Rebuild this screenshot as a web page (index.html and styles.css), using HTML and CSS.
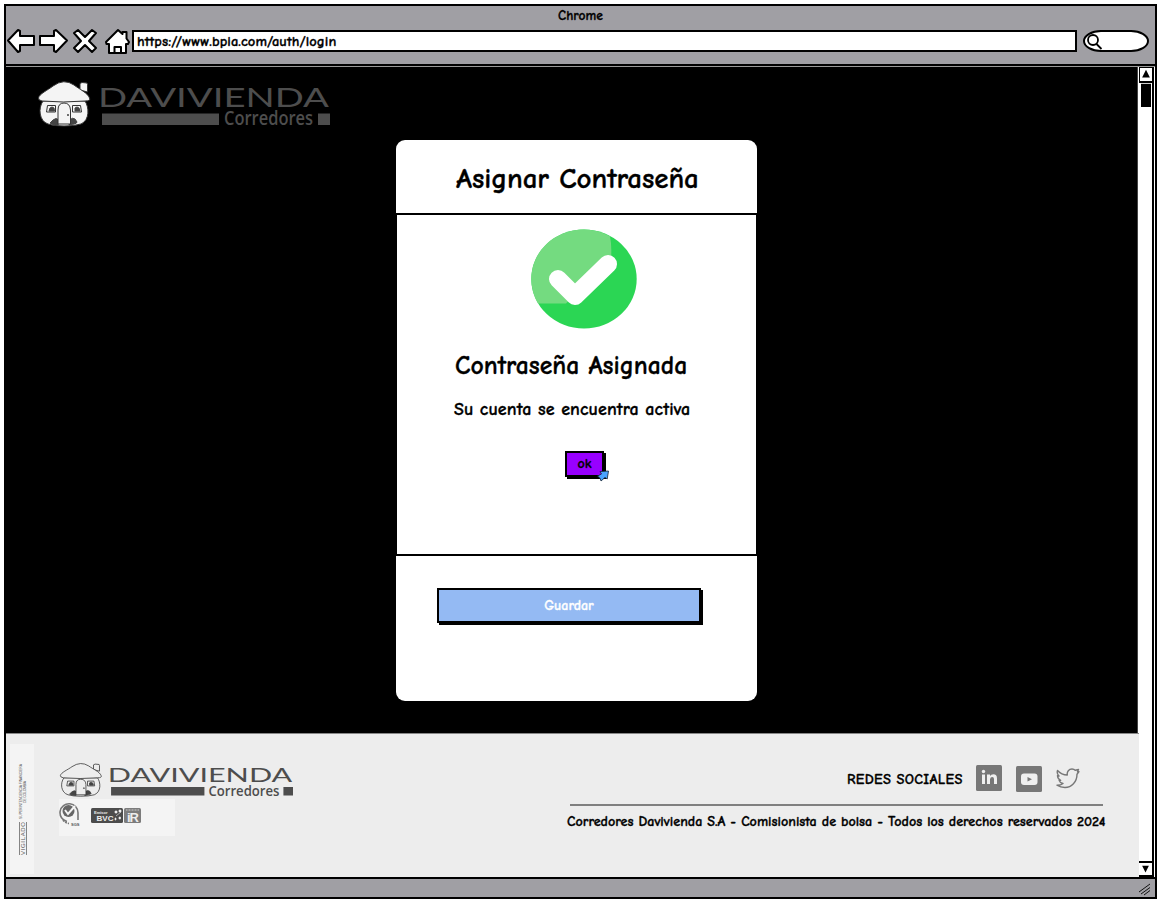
FILE: index.html
```
<!DOCTYPE html>
<html lang="es">
<head>
<meta charset="utf-8">
<title>Asignar Contraseña</title>
<link rel="stylesheet" href="styles.css">
</head>
<body>
<div class="window">
  <header class="chrome">
    <div class="chrome-title">Chrome</div>
    <div class="toolbar">
      <svg class="nav" width="126" height="28" viewBox="6 27 126 28">
        <path d="M8 40.500 18 30l2 1v5h14v9H20v6l-2 1zM40 36h14v-5l2-1 11 10.500L56 52l-2-1v-6H40z"/>
        <path d="m74 33 4-3 7 7 7-7 4 3-7 8 7 7-4 4-7-7-7 7-4-4 7-7z"/>
        <path d="m106 42 12-12 4.500 4V32h4v6.500l2.500 3.500-1 2h-2v9h-17v-9h-2.500z"/>
        <path d="M114.500 53v-6h6.500v6z"/>
      </svg>
      <div class="address">https://www.bpia.com/auth/login</div>
      <div class="search">
        <svg width="17" height="18" viewBox="0 0 17 18"><circle cx="7" cy="7" r="5"/><path d="m10.500 11 5 5"/></svg>
      </div>
    </div>
  </header>
  <div class="viewport">
    <div class="page">
      <main class="stage">
        <svg class="logo logo-top" viewBox="0 0 292 46" preserveAspectRatio="none">
          <g id="brand">
            <g class="house">
              <path d="M42 9V2.500l2-1 5 .5.500 1.500V11z"/>
              <path d="M5 20C0 27 1 40 10 43q6 2 16 2t17-2c9-4 8-17 4-23z"/>
              <path d="M.5 17C1 13 10 9 15 5Q26-3 36 4C41 8 50 12 51.500 17Q53 20 47 20Q25 22 4 20Q0 19 .5 17z"/>
              <path class="ink" d="M15 39q3-3 6 0l-1 5q-6 0-8-2zM37 38q-3-2-5 1l-1 5q8-1 8-3z"/>
              <path d="M9.500 24.500h8v6.500h-9zM34.500 24.500h8l1 6.500h-9z"/>
              <path class="ink" d="M11 30l1-3 2-1 2 1 .5 3zM37 30v-3l2-1 2 1 1 3z"/>
              <path d="M20 43V29q0-7 6-7t6.500 7v14z"/>
              <circle class="ink" cx="30" cy="34" r=".6"/>
            </g>
            <g class="brand-ink">
              <text class="wordmark" x="60" y="25.500" textLength="231" lengthAdjust="spacingAndGlyphs">DAVIVIENDA</text>
              <path d="M64 32.500h117V44H64zM280 32.500h12V44h-12z"/>
              <text class="submark" x="186" y="44" textLength="89" lengthAdjust="spacingAndGlyphs">Corredores</text>
            </g>
          </g>
        </svg>
        <section class="card">
          <h1 class="card-head">Asignar Contraseña</h1>
          <div class="card-body">
            <svg class="check" width="106" height="100" viewBox="0 0 106 100">
              <ellipse cx="53" cy="50" rx="52.700" ry="49.500" fill="#2bd654"/>
              <path d="M79 7.300Q67 .5 53 .5C24 .5.300 22 .300 50Q.300 63 7 74.500H35L80 30Q81 17 79 7.300z" fill="#74db80"/>
              <path d="m27 50 17 17 33-32" fill="none" stroke="#fff" stroke-width="18" stroke-linecap="round" stroke-linejoin="round"/>
            </svg>
            <h2 class="result">Contraseña Asignada</h2>
            <p class="detail">Su cuenta se encuentra activa</p>
            <div class="ok-wrap">
              <button class="btn btn-ok">ok</button>
              <svg class="pointer" width="12" height="12" viewBox="0 0 12 12"><path d="M3 1.500 11.500 1l-1.300 8L8 7.500 4 11l-.8-2.500L.5 6l4-2z"/></svg>
            </div>
          </div>
          <div class="card-foot"><button class="btn btn-save">Guardar</button></div>
        </section>
      </main>
      <footer class="footer">
        <div class="stamp">
          <svg width="24" height="130" viewBox="0 0 24 130">
            <g transform="rotate(-90)">
              <text class="stamp-big" x="-111" y="14.500" textLength="33">VIGILADO</text>
              <text class="stamp-small" x="-75" y="11.500" textLength="55">SUPERINTENDENCIA FINANCIERA</text>
              <text class="stamp-small" x="-59" y="16" textLength="22">DE COLOMBIA</text>
            </g>
            <path d="M9.500 78v33M16.500 78v33" stroke="#555" stroke-width=".7"/>
          </svg>
        </div>
        <div class="brand-block">
          <svg class="logo logo-foot" viewBox="0 0 292 46" preserveAspectRatio="none"><use href="#brand"/></svg>
          <svg class="seals" width="116" height="37" viewBox="0 0 116 37">
            <g fill="none" stroke="#777">
              <path d="M8 22.500A9 9 0 1 1 19 14v7" stroke-width="1.600"/>
              <path d="M4 21q2 3 6 3.500" stroke-width="1.500" stroke-dasharray="2 1"/>
            </g>
            <circle cx="9.500" cy="12" r="6" fill="#666"/>
            <path d="m6 11 3 4 7-8" fill="none" stroke="#f4f4f4" stroke-width="2"/>
            <text x="12" y="27" class="seal-sgs">SGS</text>
            <rect x="32" y="9" width="32" height="15" rx="1.500" fill="#4c4c4c"/>
            <text x="35" y="14.500" class="seal-tiny">Emisor</text>
            <text x="37.500" y="22" class="seal-bvc" textLength="17">BVC</text>
            <path d="M56 12h2v2h-2zM60 11h2v2h-2zM57 17l5-4M56 19h1v2h-1zM60 18h1.500v2H60z" fill="#eee" stroke="#eee" stroke-width=".6"/>
            <rect x="65" y="9" width="17" height="15" rx="1.500" fill="#7c7c7c"/>
            <path d="M67 11h13" stroke="#ccc" stroke-dasharray="1 .5"/>
            <text x="68" y="23" class="seal-ir" textLength="12">iR</text>
          </svg>
        </div>
        <div class="legal">
          <div class="social">
            <span class="social-label">REDES SOCIALES</span>
            <svg class="ico ico-in" width="26" height="26" viewBox="0 0 26 26">
              <rect width="26" height="26" rx="1.500" fill="#777"/>
              <path d="M6 9.500h3V19H6zM11 9.500h3V11q1-1.700 3.400-1.700Q21 9.300 21 13.500V19h-3v-5q0-2-1.800-2T14 14.200V19h-3z" fill="#efefef"/><circle cx="7.500" cy="6.500" r="1.700" fill="#efefef"/>
            </svg>
            <svg class="ico ico-yt" width="26" height="26" viewBox="0 0 26 26">
              <rect width="26" height="26" rx="1.500" fill="#777"/>
              <rect x="5" y="7.500" width="16.500" height="11.500" rx="3" fill="#efefef"/><path d="m11.500 11 4.500 2.300-4.500 2.300z" fill="#777"/>
            </svg>
            <svg class="ico ico-tw" width="24" height="21" viewBox="0 0 24 21">
              <path d="M1.500 2.500Q5.500 7 11.300 7C10.700 3.500 13 1 16 1q2 0 3.200 1.300L22.500 1.500l-1 2.300 1.500-.2-2 2.600C21 14 15.500 19.500 9 19.500Q4.500 19.500 1 17.200q4 0 6-1.700Q4 15 3.200 12.500l1.500-.2Q1.500 11 1.500 7.500l1.500.5Q.5 5.500 1.500 2.500z" fill="none" stroke="#777" stroke-width="1.400" stroke-linejoin="round"/>
            </svg>
          </div>
          <div class="rule"></div>
          <p class="copyright">Corredores Davivienda S.A - Comisionista de bolsa - Todos los derechos reservados 2024</p>
        </div>
      </footer>
    </div>
    <div class="scrollbar">
      <svg class="arrow" width="13" height="15" viewBox="0 0 13 15"><path d="M6.500 2 11 11H2z"/></svg>
      <div class="thumb"></div>
      <svg class="arrow arrow-down" width="13" height="16" viewBox="0 0 13 16"><path d="M2 3.500h9L6.500 12.500z"/></svg>
    </div>
  </div>
  <div class="status">
    <svg width="14" height="13" viewBox="0 0 14 13"><path d="M1 9 12 1M3 11l9-6.500M6 12l6-4.500" fill="none" stroke="#111" stroke-width="1"/></svg>
  </div>
</div>
</body>
</html>
```

FILE: styles.css
```
* { box-sizing: border-box; }
body {
  margin: 0;
  padding: 4px;
  width: 1161px;
  height: 903px;
  background: #fff;
  color: #000;
  font-family: "Comic Sans MS", "Comic Neue", "Open Sans", sans-serif;
  font-weight: 700;
  -webkit-text-stroke: .3px currentColor;
  overflow: hidden;
}
svg { display: block; flex: none; -webkit-text-stroke: 0; }
h1, h2, p { margin: 0; white-space: nowrap; }

.window {
  width: 1153px;
  height: 895px;
  border: 2px solid #000;
  background: #a09fa4;
  display: flex;
  flex-direction: column;
}
.chrome { height: 60px; border-bottom: 2px solid #000; }
.chrome-title {
  height: 21px;
  line-height: 19px;
  text-align: center;
  font-size: 13.500px;
}
.toolbar { display: flex; align-items: center; height: 28px; }
.nav path { fill: #fff; stroke: #000; stroke-width: 2; stroke-linejoin: round; }
.address {
  width: 945px;
  height: 22px;
  border: 2px solid #000;
  background: #fff;
  padding-left: 3px;
  line-height: 19px;
  font-size: 14.500px;
  letter-spacing: .05px;
}
.search {
  width: 66px;
  height: 22px;
  margin-left: 6px;
  padding: 1px 0 0 1px;
  border: 2px solid #000;
  border-radius: 18px / 11px;
  background: #fff;
}
.search svg { fill: none; stroke: #000; stroke-width: 1.800; }

.viewport {
  display: flex;
  height: 813px;
  border-top: 1px solid #999;
  border-bottom: 2px solid #000;
  background: #fff;
}
.page { width: 1134px; }
.stage {
  width: 1132px;
  height: 666px;
  padding: 14px 0 0 32px;
  background: #000;
  border-right: 1px solid #444;
}
.logo { overflow: visible; }
.logo-top { width: 292px; height: 46px; --house: #f4f4f4; }
.logo-foot { width: 233px; height: 34px; --house: #ededed; }
.house { fill: var(--house); stroke: #333; stroke-width: 1; }
.house .ink { fill: #444; stroke: #444; }
.brand-ink { fill: #4d4d4d; }
.wordmark { font: 400 26.500px "Lato", sans-serif; }
.submark { font: 600 19px "Open Sans", sans-serif; }

.card {
  width: 361px;
  height: 561px;
  margin: 13px 0 0 358px;
  background: #fff;
  border-radius: 9px;
}
.card-head {
  height: 75px;
  padding-left: 60px;
  border-bottom: 2px solid #000;
  font-size: 29px;
  line-height: 77px;
  letter-spacing: -.07px;
}
.card-body {
  height: 341px;
  border: solid #000;
  border-width: 0 1px 2px;
  padding-top: 14px;
}
.check { margin-left: 134px; }
.result {
  margin: 20px 0 0 58px;
  font-size: 25.700px;
  line-height: 34px;
}
.detail { margin: 15px 0 0 57px; font-size: 18px; line-height: 24px; letter-spacing: .1px; }
.ok-wrap { position: relative; width: 44px; margin: 29px 0 0 168px; }
.btn {
  display: block;
  padding: 0;
  border: 2px solid #000;
  font: inherit;
  font-size: 14px;
}
.btn-ok { width: 39px; height: 26px; background: #9800ff; color: #000; box-shadow: 2px 2px #000; line-height: 22px; }
.pointer { position: absolute; left: 32px; top: 19px; }
.pointer path { fill: #4aa3ff; stroke: #123; stroke-width: .8; }
.card-foot { padding: 32px 0 0 41px; }
.btn-save { width: 264px; height: 35px; background: #94baf3; color: #fff; box-shadow: 2px 2px #000; }

.footer {
  display: flex;
  height: 144px;
  border-top: 1px solid #888;
  background: #ededed;
}
.stamp { width: 24px; height: 130px; margin: 10px 0 0 4px; background: #f4f4f4; }
.stamp text { fill: #555; font-family: "Liberation Sans", sans-serif; font-weight: 400; }
.stamp .stamp-big { font-size: 6px; }
.stamp .stamp-small { font-size: 3.500px; }
.brand-block { width: 240px; margin-left: 25px; padding-top: 29px; }
.logo-foot { margin-left: 1px; }
.seals { margin-top: 2px; background: #f4f4f4; }
.seals text { font-family: "Liberation Sans", sans-serif; font-weight: 700; fill: #eee; }
.seals .seal-sgs { font-size: 4px; fill: #555; }
.seals .seal-tiny { font-size: 4px; }
.seals .seal-bvc { font-size: 8px; }
.seals .seal-ir { font-size: 13px; }
.legal { width: 560px; margin-left: 268px; padding-top: 31px; }
.social { display: flex; align-items: flex-start; height: 39px; padding-left: 280px; }
.social-label { width: 129px; flex: none; font-size: 14.500px; line-height: 29px; white-space: nowrap; letter-spacing: .3px; }
.ico-yt { margin: 1px 0 0 14px; }
.ico-tw { margin: 3px 0 0 14px; }
.rule { width: 533px; height: 2px; margin: 0 0 0 3px; background: #808080; }
.copyright { font-size: 14.100px; line-height: 20px; margin-top: 6px; }

.scrollbar {
  width: 15px;
  display: flex;
  flex-direction: column;
  background: #fff;
  border: solid #000;
  border-width: 1px 2px 0 0;
  margin-left: -1px;
}
.arrow { background: #fff; }
.arrow:first-child { border-bottom: 2px solid #000; border-left: 1px solid #000; }
.thumb { width: 10px; height: 24px; margin: 0 0 auto 2px; background: #000; border-top: 1px solid #ccc; }
.arrow-down { border-top: 2px solid #000; border-bottom: 2px solid #000; }
.status { flex: 1; display: flex; justify-content: flex-end; padding: 4px 3px 0 0; }
```
